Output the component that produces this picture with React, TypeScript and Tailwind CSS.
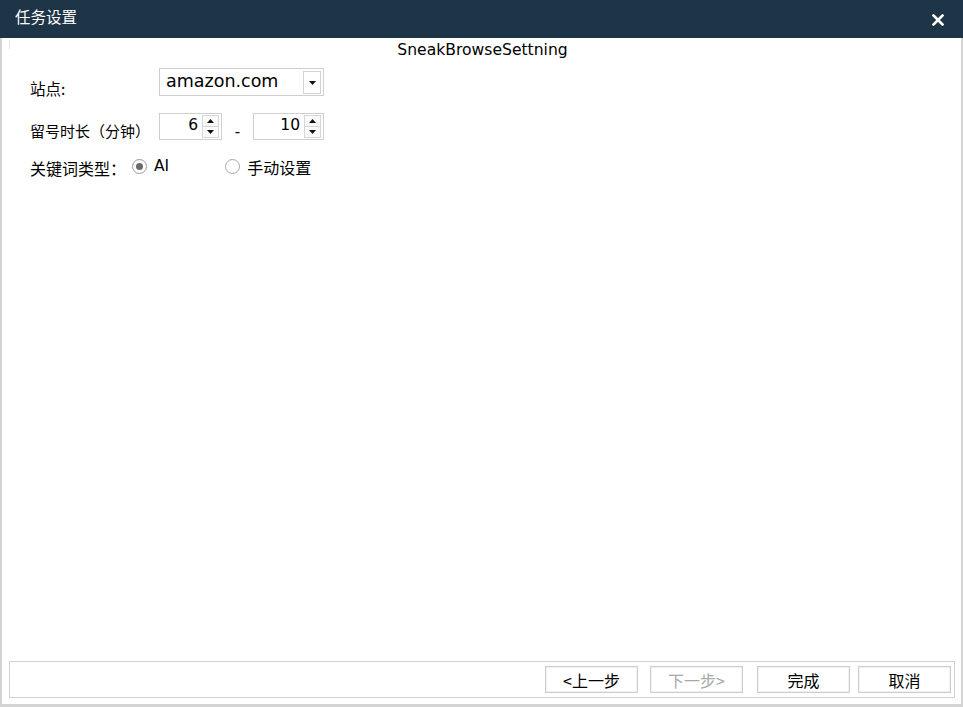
import React from "react";

const Up = () => (
  <svg width="7" height="4" viewBox="0 0 7 4"><path d="M0 4 L3.5 0 L7 4 Z" fill="#111" /></svg>
);
const Down = () => (
  <svg width="7" height="4" viewBox="0 0 7 4"><path d="M0 0 L3.5 4 L7 0 Z" fill="#111" /></svg>
);

function Spin({ value, width }: { value: string; width: string }) {
  return (
    <div className={`${width} h-[27px] border border-[#cfcfcf] bg-white flex items-stretch`}>
      <div className="flex-1 flex items-center justify-end pr-[4px] text-[15.5px] leading-none text-[#000] pb-[2px]">{value}</div>
      <div className="w-[17px] my-[1px] mr-[2px] flex flex-col border border-[#d6d6d6]">
        <div className="flex-1 border-b border-[#d6d6d6] bg-[#fafafa] flex items-center justify-center"><Up /></div>
        <div className="flex-1 bg-[#fafafa] flex items-center justify-center"><Down /></div>
      </div>
    </div>
  );
}

function Btn({ label, disabled, cls }: { label: string; disabled?: boolean; cls?: string }) {
  return (
    <div
      className={`w-[93px] h-[27px] border border-[#cdcdcd] shadow-[inset_0_0_0_1px_#f1f1f1] bg-white flex items-center justify-center text-[16px] ${
        disabled ? "text-[#a8a8a8]" : "text-[#000]"
      } ${cls ?? ""}`}
    >
      {label}
    </div>
  );
}

export default function App() {
  return (
    <div className="w-[963px] h-[707px] flex flex-col bg-white font-['DejaVu_Sans','Noto_Sans_CJK_SC',sans-serif] overflow-hidden">
      <div className="h-[38px] bg-[#1e3447] flex items-center justify-between pl-[15px] pr-[19px] shrink-0">
        <span className="text-white text-[15.5px] leading-none font-['Noto_Sans_CJK_SC',sans-serif] -mt-[4px]">任务设置</span>
        <svg width="12" height="12" viewBox="0 0 12 12" className="mt-[2px]">
          <path d="M1.5 1.5 L10.5 10.5 M10.5 1.5 L1.5 10.5" stroke="#fff" strokeWidth="2.6" strokeLinecap="square" />
        </svg>
      </div>
      <div className="flex-1 flex flex-col border-l-2 border-r-2 border-b-[3px] border-[#d4d4d4] min-h-0">
        <div className="flex">
          <div className="ml-[7px] w-px h-[9px] bg-[#e2e2e2] mt-[2px]" />
          <div className="flex-1 text-center text-[15.6px] leading-[20px] text-[#000] mt-[2px] -ml-[6px]">SneakBrowseSettning</div>
        </div>
        <div className="pl-[28px] flex flex-col">
          <div className="flex items-start mt-[8px]">
            <div className="w-[129px] mt-[11px] text-[15.5px] leading-[18px] text-[#000] font-['Noto_Sans_CJK_SC',sans-serif]">站点:</div>
            <div className="w-[165px] h-[28px] border border-[#cfcfcf] flex items-stretch">
              <div className="flex-1 flex items-center pl-[6px] text-[17.5px] leading-none text-[#000] pb-[1px]">amazon.com</div>
              <div className="w-[18px] mt-[2px] mb-[1px] mr-[2px] border border-[#d3d3d3] flex items-center justify-center">
                <Down />
              </div>
            </div>
          </div>
          <div className="flex items-start mt-[16px]">
            <div className="w-[129px] mt-[9px] text-[15px] leading-[18px] text-[#000] font-['Noto_Sans_CJK_SC',sans-serif] whitespace-nowrap">留号时长（分钟）</div>
            <Spin value="6" width="w-[63px]" />
            <div className="w-[31px] flex justify-center pt-[8px] text-[15px] text-[#000]">-</div>
            <Spin value="10" width="w-[71px]" />
          </div>
          <div className="flex items-center mt-[13px] h-[20px] text-[16px] text-[#000]">
            <span className="w-[102px] font-['Noto_Sans_CJK_SC',sans-serif] mt-[3px] whitespace-nowrap">关键词类型：</span>
            <div className="w-[15px] h-[15px] rounded-full border border-[#9a9a9a] flex items-center justify-center bg-white">
              <div className="w-[7px] h-[7px] rounded-full bg-[#6a6a6a]" />
            </div>
            <span className="ml-[7px] text-[15.5px] leading-none">AI</span>
            <div className="ml-[56px] w-[15px] h-[15px] rounded-full border border-[#a8a8a8] bg-white" />
            <span className="ml-[7px] font-['Noto_Sans_CJK_SC',sans-serif] mt-[1px]">手动设置</span>
          </div>
        </div>
        <div className="flex-1" />
        <div className="ml-[7px] mr-[6px] mb-[6px] h-[37px] border border-[#d0d0d0] flex items-start justify-end pr-[3px] pt-[4px] font-['Noto_Sans_CJK_SC',sans-serif]">
          <Btn label="<上一步" />
          <Btn label="下一步>" disabled cls="ml-[12px]" />
          <Btn label="完成" cls="ml-[14px]" />
          <Btn label="取消" cls="ml-[8px]" />
        </div>
      </div>
    </div>
  );
}
